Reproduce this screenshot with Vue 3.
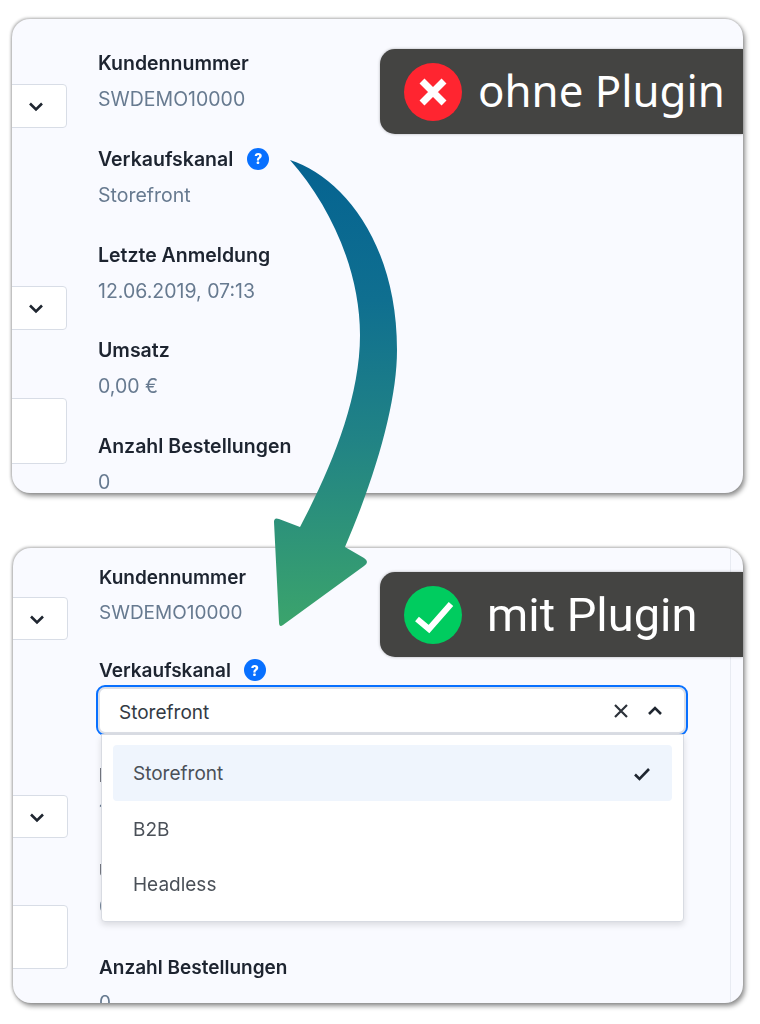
<template>
  <div class="page">
    <!-- ohne Plugin -->
    <section class="card card-before">
      <div class="controls">
        <div class="control"><svg class="chevron" viewBox="0 0 16 16"><path d="M2 5.5 8 11.5l6-6" /></svg></div>
        <div class="control"><svg class="chevron" viewBox="0 0 16 16"><path d="M2 5.5 8 11.5l6-6" /></svg></div>
        <div class="control control-tall"></div>
      </div>
      <div class="fields">
        <div v-for="field in beforeFields" :key="field.label" class="field">
          <div class="label">
            {{ field.label }}
            <span v-if="field.help" class="help">?</span>
          </div>
          <div class="value">{{ field.value }}</div>
        </div>
      </div>
      <div class="tag">
        <span class="tag-icon tag-icon-red">
          <svg viewBox="0 0 58 58"><path d="M18 18 40 40M40 18 18 40" /></svg>
        </span>
        <span class="tag-text">ohne Plugin</span>
      </div>
    </section>

    <!-- mit Plugin -->
    <section class="card card-after">
      <div class="controls">
        <div class="control"><svg class="chevron" viewBox="0 0 16 16"><path d="M2 5.5 8 11.5l6-6" /></svg></div>
        <div class="control"><svg class="chevron" viewBox="0 0 16 16"><path d="M2 5.5 8 11.5l6-6" /></svg></div>
        <div class="control control-tall"></div>
      </div>
      <div class="fields">
        <div class="field">
          <div class="label">Kundennummer</div>
          <div class="value">SWDEMO10000</div>
        </div>
        <div class="field field-select">
          <div class="label">Verkaufskanal <span class="help">?</span></div>
          <div class="select">
            <span>Storefront</span>
            <svg class="select-x" viewBox="0 0 16 16"><path d="M2 2l12 12M14 2 2 14" /></svg>
            <svg class="select-up" viewBox="0 0 16 16"><path d="M2 11 8 5l6 6" /></svg>
            <ul class="menu">
              <li v-for="option in options" :key="option" class="option" :class="{ active: option === 'Storefront' }">
                {{ option }}
                <svg v-if="option === 'Storefront'" class="tick" viewBox="0 0 18 14"><path d="M2 7.5 6.5 12 16 2" /></svg>
              </li>
            </ul>
          </div>
        </div>
        <div v-for="field in afterFields" :key="field.label" class="field">
          <div class="label">{{ field.label }}</div>
          <div class="value">{{ field.value }}</div>
        </div>
      </div>
      <div class="tag">
        <span class="tag-icon tag-icon-green">
          <svg viewBox="0 0 58 58"><path d="M13 33 25 43 47 18" /></svg>
        </span>
        <span class="tag-text tag-text-after">mit Plugin</span>
      </div>
    </section>

    <svg class="arrow" viewBox="0 0 760 1024">
      <defs>
        <linearGradient id="arrowFill" x1="0" y1="160" x2="0" y2="626" gradientUnits="userSpaceOnUse">
          <stop offset="0" stop-color="#056391" />
          <stop offset="0.3" stop-color="#0f6f90" />
          <stop offset="0.6" stop-color="#218385" />
          <stop offset="1" stop-color="#3ba46c" />
        </linearGradient>
      </defs>
      <path fill="url(#arrowFill)" d="M290 160C340 176 397 240 397 350C397 400 378 470 345 547L364 558Q370 562 364 566L283 625Q279 628 279 622L274 522Q274 517 279 519L300 527C330 470 360 400 360 335C360 270 330 205 290 160Z" />
    </svg>
  </div>
</template>

<script setup>
const beforeFields = [
  { label: 'Kundennummer', value: 'SWDEMO10000' },
  { label: 'Verkaufskanal', value: 'Storefront', help: true },
  { label: 'Letzte Anmeldung', value: '12.06.2019, 07:13' },
  { label: 'Umsatz', value: '0,00 €' },
  { label: 'Anzahl Bestellungen', value: '0' }
]

const afterFields = [
  { label: 'Letzte Anmeldung', value: '12.06.2019, 07:13' },
  { label: 'Umsatz', value: '0,00 €' },
  { label: 'Anzahl Bestellungen', value: '0' }
]

const options = ['Storefront', 'B2B', 'Headless']
</script>

<style>
html,
body {
  background: #fff;
}
</style>

<style scoped>
.page {
  position: relative;
  width: 760px;
  height: 1024px;
  overflow: hidden;
  padding: 19px 0 0 12px;
  box-sizing: border-box;
  font-family: Inter, "Liberation Sans", sans-serif;
}

.card {
  position: relative;
  display: flex;
  width: 731px;
  height: 474px;
  overflow: hidden;
  box-sizing: border-box;
  background: #f9faff;
  border-radius: 18px;
  box-shadow: 2px 3px 5px rgba(0, 0, 0, 0.45), -1px -1px 3px rgba(0, 0, 0, 0.28);
}

.card-after {
  width: 730px;
  height: 455px;
  margin: 55px 0 0 1px;
}

.controls {
  width: 55px;
  flex-shrink: 0;
  padding-top: 65px;
}

.card-after .controls {
  padding-top: 49px;
}

.control {
  display: flex;
  align-items: center;
  justify-content: flex-end;
  height: 44px;
  margin: 0 0 158px -10px;
  padding-right: 22px;
  box-sizing: border-box;
  background: #fff;
  border: 1px solid #d8dde6;
  border-radius: 4px;
}

.control:nth-child(2) {
  margin-bottom: 68px;
}

.control-tall {
  height: 66px;
}

.card-after .control {
  height: 43px;
  margin-bottom: 155px;
}

.card-after .control:nth-child(2) {
  margin-bottom: 67px;
}

.card-after .control-tall {
  height: 64px;
}

.chevron {
  width: 16px;
  height: 16px;
}

.chevron path,
.select-up path,
.tick path {
  fill: none;
  stroke: #1f2630;
  stroke-width: 2.6;
}

.select-x path {
  fill: none;
  stroke: #2c323a;
  stroke-width: 2.2;
}

.fields {
  flex: 1;
  margin-left: 31px;
  padding-top: 32px;
  filter: blur(0.4px);
}

.card-after .fields {
  margin-right: 12px;
  padding-top: 17px;
  border-right: 1px solid #e8ebf2;
}

.field {
  margin-bottom: 35.8px;
}

.card-after .field {
  margin-bottom: 36px;
}

.card-after .field:first-child {
  margin-bottom: 33px;
}

.card-after .field-select {
  margin-bottom: 29px;
}

.label {
  display: flex;
  align-items: center;
  gap: 14px;
  height: 24px;
  font-size: 19.5px;
  font-weight: 600;
  color: #1d2430;
}

.value {
  height: 24px;
  margin-top: 12px;
  font-size: 19.5px;
  color: #677a90;
}

.card-after .label,
.card-after .value {
  font-size: 19px;
}

.card-after .label {
  gap: 13px;
}

.help {
  display: flex;
  align-items: center;
  justify-content: center;
  width: 22px;
  height: 22px;
  border-radius: 50%;
  background: #0870ff;
  color: #fff;
  font-size: 14px;
  font-weight: 800;
}

.select {
  position: relative;
  display: flex;
  align-items: center;
  width: 588px;
  height: 47px;
  margin: 5px 0 0 -1px;
  padding: 3px 21px 0 19px;
  box-sizing: border-box;
  background: #fff;
  border: 2px solid #dcdfe6;
  border-radius: 7px;
  outline: 2.5px solid #0870ff;
  font-size: 19px;
  color: #333a44;
}

.select span {
  flex: 1;
}

.select-x {
  width: 16px;
  height: 16px;
  margin: -3px 18px 0 0;
}

.select-up {
  width: 16px;
  height: 16px;
  margin-top: -3px;
}

.menu {
  position: absolute;
  z-index: 2;
  top: 45px;
  left: 1px;
  width: 583px;
  height: 188px;
  margin: 0;
  padding: 10px 11px;
  list-style: none;
  box-sizing: border-box;
  background: #fff;
  border: 1px solid #d8dbe2;
  border-radius: 0 0 4px 4px;
  box-shadow: 0 3px 6px rgba(0, 0, 0, 0.12);
}

.option {
  display: flex;
  align-items: center;
  justify-content: space-between;
  height: 55.5px;
  padding: 2px 21px 0 20px;
  box-sizing: border-box;
  border-radius: 4px;
  font-size: 19px;
  color: #4a5058;
}

.option.active {
  background: #eff5fd;
}

.tick {
  width: 18px;
  height: 14px;
}

.tag {
  position: absolute;
  top: 30px;
  right: 0;
  display: flex;
  align-items: center;
  width: 363px;
  height: 85px;
  padding-left: 24px;
  box-sizing: border-box;
  background: #444442;
  border-radius: 15px 0 0 15px;
  box-shadow: 0 0 3px rgba(0, 0, 0, 0.3);
}

.card-after .tag {
  top: 24px;
}

.tag-icon {
  width: 58px;
  height: 58px;
  flex-shrink: 0;
  border-radius: 50%;
}

.tag-icon svg {
  display: block;
  width: 58px;
  height: 58px;
}

.tag-icon path {
  fill: none;
  stroke: #fff;
  stroke-width: 7;
}

.tag-icon-green path {
  stroke-width: 6;
}

.tag-icon-red {
  background: #ff2530;
}

.tag-icon-green {
  background: #00cc5f;
}

.tag-text {
  margin: -3px 0 0 16px;
  font-family: "Noto Sans", sans-serif;
  font-size: 43.8px;
  color: #fff;
}

.tag-text-after {
  margin: 0 0 0 25px;
  font-family: Roboto, sans-serif;
  font-size: 47px;
}

.arrow {
  position: absolute;
  top: 0;
  left: 0;
  width: 760px;
  height: 1024px;
  pointer-events: none;
}
</style>
